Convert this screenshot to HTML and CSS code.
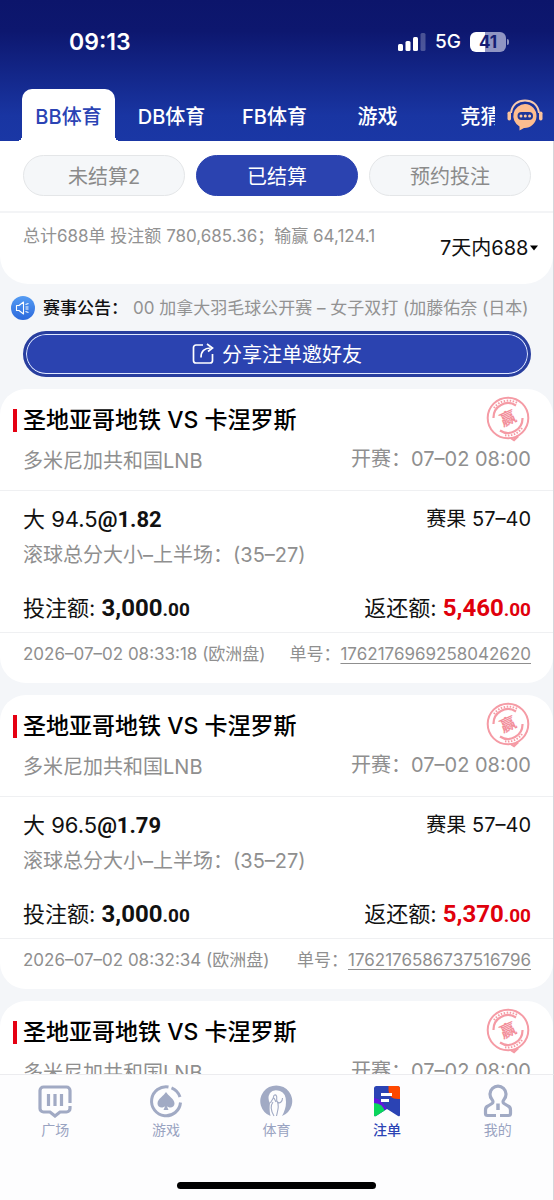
FILE: index.html
```html
<!DOCTYPE html>
<html lang="zh-CN">
<head>
<meta charset="utf-8">
<meta name="viewport" content="width=device-width, initial-scale=1">
<title>注单</title>
<link rel="stylesheet" href="styles.css">
</head>
<body>
<header class="top">
  <div class="status">
    <time class="clock">09:13</time>
    <div class="status-right">
      <svg width="28" height="18" viewBox="0 0 28 18" fill="#fff"><rect y="11" width="5" height="7" rx="1.500"/><rect x="7.500" y="8" width="5" height="10" rx="1.500"/><rect x="15" y="4" width="5" height="14" rx="1.500"/><rect x="22.500" width="5" height="18" rx="1.500" opacity=".25"/></svg>
      <span class="network">5G</span>
      <span class="battery">41</span>
    </div>
  </div>
  <div class="tab-row">
    <div class="tabs">
      <button class="tab active">BB体育</button>
      <button class="tab">DB体育</button>
      <button class="tab">FB体育</button>
      <button class="tab">游戏</button>
      <button class="tab">竞猜</button>
    </div>
    <button class="service" aria-label="客服">
      <svg width="36" height="32" viewBox="0 0 36 32">
        <path d="M4 14C5 5.500 11 1.500 18 1.500S31 5.500 32 14" fill="none" stroke="#f6c9ae" stroke-width="2"/>
        <rect x="0.500" y="12.500" width="3.500" height="9" rx="1.700" fill="#fbc49c"/><rect x="32" y="12.500" width="3.500" height="9" rx="1.700" fill="#fbc49c"/>
        <path d="M18 5a12 12 0 1 1-1 24l-4.500 2.500v-4A12 12 0 0 1 18 5z" fill="#fdbd90"/>
        <rect x="10.500" y="13" width="15.500" height="8" rx="4" fill="#1c3699"/>
        <g fill="#fdc9a2"><circle cx="14" cy="17" r="1.500"/><circle cx="18.300" cy="17" r="1.500"/><circle cx="22.600" cy="17" r="1.500"/></g>
      </svg>
    </button>
  </div>
</header>

<main class="content">
  <section class="filter">
    <div class="pills">
      <button class="pill">未结算2</button>
      <button class="pill selected">已结算</button>
      <button class="pill">预约投注</button>
    </div>
    <div class="summary">
      <p class="totals">总计688单 投注额 780,685.36；输赢 64,124.1</p>
      <label class="range">
        <select aria-label="时间范围"><option>7天内688</option></select>
        <svg width="8" height="6" viewBox="0 0 8 6"><path d="M0 .5h8L4 5.500z"/></svg>
      </label>
    </div>
  </section>

  <section class="notice">
    <svg width="24" height="24" viewBox="0 0 24 24">
      <defs><linearGradient id="blue" x1="0" y1="0" x2="0" y2="1"><stop stop-color="#559cf3"/><stop offset="1" stop-color="#2c69dc"/></linearGradient></defs>
      <circle cx="12" cy="12" r="12" fill="url(#blue)"/>
      <g fill="none" stroke="#fff" stroke-width="1.100" stroke-linejoin="round"><path d="M5.500 9.500H8l4.500-3.500v12L8 14.500H5.500z"/><path d="M14.500 8.500l3-1M14.500 11h3M14.500 13h3M14.500 15.500l3 1"/></g>
    </svg>
    <strong>赛事公告：</strong>
    <p>00 加拿大羽毛球公开赛 – 女子双打 (加藤佑奈 (日本)</p>
  </section>

  <button class="share">
    <svg width="22" height="22" viewBox="0 0 22 22" fill="none" stroke="#fff" stroke-width="1.700"><path d="M11 2H4a2.500 2.500 0 0 0-2.500 2.500v13A2.500 2.500 0 0 0 4 20h14a2.500 2.500 0 0 0 2.500-2.500V11"/><path d="M9 14.500C9 8 12.500 5 18.500 5"/><path d="M15 1l5.500 4L16 8.500"/></svg>
    <span>分享注单邀好友</span>
  </button>

  <article class="card">
    <div class="match">
      <div class="match-left"><h2>圣地亚哥地铁 VS 卡涅罗斯</h2><p>多米尼加共和国LNB</p></div>
      <div class="match-right">
        <svg class="stamp" viewBox="0 0 46 46">
          <g id="stamp">
            <g fill="none" stroke="#f59ba5">
              <circle cx="23" cy="22" r="20.300" stroke-width="2"/>
              <path d="M8.500 22A14.500 14.500 0 0 1 31 9.500" stroke-width="2.200"/>
              <path d="M37.500 22A14.500 14.500 0 0 1 15 34.500" stroke-width="2.200"/>
              <path d="M9 12A17.500 17.500 0 0 1 33 7.500M37 32A17.500 17.500 0 0 1 20 39.300" stroke-width="2" stroke-dasharray="1.500 1.500"/>
              <path d="M26 42l3 2 4-4" stroke-width="2.500"/>
            </g>
            <text x="23" y="28" text-anchor="middle" class="stamp-text" transform="rotate(-24 23 22)">赢</text>
          </g>
        </svg>
        <p>开赛：07–02 08:00</p>
      </div>
    </div>
    <div class="bet">
      <div class="row pick"><span>大 94.5<b>@1.82</b></span><span class="result">赛果 57–40</span></div>
      <p class="market">滚球总分大小–上半场：(35–27)</p>
      <div class="row money"><span>投注额: <b>3,000<small>.00</small></b></span><span>返还额: <b class="win">5,460<small>.00</small></b></span></div>
    </div>
    <div class="foot"><span>2026–07–02 08:33:18 (欧洲盘)</span><span>单号：<a href="#order1">1762176969258042620</a></span></div>
  </article>

  <article class="card">
    <div class="match">
      <div class="match-left"><h2>圣地亚哥地铁 VS 卡涅罗斯</h2><p>多米尼加共和国LNB</p></div>
      <div class="match-right"><svg class="stamp" viewBox="0 0 46 46"><use href="#stamp"/></svg><p>开赛：07–02 08:00</p></div>
    </div>
    <div class="bet">
      <div class="row pick"><span>大 96.5<b>@1.79</b></span><span class="result">赛果 57–40</span></div>
      <p class="market">滚球总分大小–上半场：(35–27)</p>
      <div class="row money"><span>投注额: <b>3,000<small>.00</small></b></span><span>返还额: <b class="win">5,370<small>.00</small></b></span></div>
    </div>
    <div class="foot"><span>2026–07–02 08:32:34 (欧洲盘)</span><span>单号：<a href="#order2">1762176586737516796</a></span></div>
  </article>

  <article class="card">
    <div class="match">
      <div class="match-left"><h2>圣地亚哥地铁 VS 卡涅罗斯</h2><p>多米尼加共和国LNB</p></div>
      <div class="match-right"><svg class="stamp" viewBox="0 0 46 46"><use href="#stamp"/></svg><p>开赛：07–02 08:00</p></div>
    </div>
  </article>
</main>

<nav class="bottom">
  <div class="links">
    <a href="#square"><svg width="34" height="34" viewBox="0 0 34 34" fill="none" stroke="#a1aac4" stroke-width="3.200"><path d="M32 19V6.500A3.500 3.500 0 0 0 28.500 3h-23A3.500 3.500 0 0 0 2 6.500v18A3.500 3.500 0 0 0 5.500 28H12l5 4 5-4h6.500a3.500 3.500 0 0 0 3.500-3.500V22"/><path d="M10.500 10v12M17 10v12M23.500 10v12"/></svg>广场</a>
    <a href="#games"><svg width="34" height="34" viewBox="0 0 34 34" fill="none" stroke="#a1aac4" stroke-width="3"><path d="M19.500 3A14.500 14.500 0 1 0 31.500 18.500"/><path d="M22.500 3.800A14.500 14.500 0 0 1 31 13"/><path d="M17 8C15 11.500 8.500 15 8.500 19.500c0 4.500 5.500 5 7.700 2.500L14.500 26h5l-1.700-4C20 24.500 25.500 24 25.500 19.500 25.500 15 19 11.500 17 8z" fill="#a1aac4" stroke="none"/></svg>游戏</a>
    <a href="#sports"><svg width="34" height="34" viewBox="0 0 34 34"><path d="M11.500 32A16 15.800 0 1 1 23 32q4-7 4-14 0-9-6-11-7-2-10 2-3 5 0 10-1 7 .5 13z" fill="#a1aac4"/><path d="M11.500 19c1-3 3-4 3-6s2-3 3-1-1 4 1 6 5 0 5-4M14 18c-3 4-2 9 1 14M18.500 18c2 5 0 9-1 14M15 14l2 4" fill="none" stroke="#a1aac4" stroke-width="1.100"/></svg>体育</a>
    <a href="#bets" class="current"><svg width="34" height="34" viewBox="0 0 34 34"><defs><clipPath id="flag"><path d="M6.500 2h21A2.500 2.500 0 0 1 30 4.500V31q0 2-2 1l-11-7-11 7q-2 1-2-1V4.500A2.500 2.500 0 0 1 6.500 2z"/></clipPath></defs><g clip-path="url(#flag)"><path fill="#2b43b4" d="M0 0h34v34H0z"/><path fill="#ff4800" d="M18.500 0H32v15h-4q-9.500 0-9.500-9z"/><path fill="#6414df" d="M2 14c8 0 11 5 15 11H4z"/><path fill="#0bd65c" d="M2 19q11 0 13 9l-5 6H2z"/></g><path stroke="#fff" stroke-width="3" d="M11 10.500h11M11 16.500h8"/></svg>注单</a>
    <a href="#me"><svg width="34" height="34" viewBox="0 0 34 34" fill="none" stroke="#a1aac4" stroke-width="3.200" stroke-linejoin="round"><path d="M15 31.500H6.500Q4.500 31.500 4.500 29.500V26q0-3 2.500-4l4-2.500q2-1.500 0-4a8 8 0 1 1 12 0q-2 2.500 0 4l4 2.500q2.500 1 2.500 4v3.500q0 2-2 2H19"/><path d="M17 19.500v6.500" stroke-width="3.500"/></svg>我的</a>
  </div>
  <div class="home-bar"></div>
</nav>
</body>
</html>
```
FILE: styles.css
```css
* { box-sizing: border-box; }

body {
  margin: 0;
  height: 100vh;
  display: flex;
  flex-direction: column;
  background: #f4f6f9;
  color: #111;
  font: 20px/28px Inter, "Noto Sans CJK SC", sans-serif;
}

h2, p { margin: 0; font-weight: 400; }
button { border: 0; margin: 0; padding: 0; background: none; font: inherit; color: inherit; }
svg { display: block; flex: none; }

.top {
  flex: none;
  color: #fff;
  background: linear-gradient(#0c156b 0, #0d176f 22%, #1935a2 82%, #1a37a5);
}
.status {
  display: flex;
  justify-content: space-between;
  align-items: center;
  padding: 28px 48px 33px 69px;
}
.clock { font-size: 23px; font-weight: 600; }
.status-right { display: flex; align-items: center; gap: 9px; }
.network { font-size: 19px; font-weight: 500; }
.battery {
  position: relative;
  width: 36px;
  border-radius: 6px;
  background: linear-gradient(90deg, #fff 41%, #9095c3 41%);
  color: #151d73;
  font-size: 17px;
  font-weight: 700;
  line-height: 20px;
  text-align: center;
}
.battery::after {
  content: "";
  position: absolute;
  right: -3px;
  top: 7px;
  width: 2px;
  height: 6px;
  border-radius: 0 2px 2px 0;
  background: #8b90bf;
}

.tab-row { display: flex; align-items: center; gap: 12px; padding: 0 11px 0 17px; }
.tabs { flex: 1; display: flex; min-width: 0; overflow: hidden; }
.tab { flex: 0 0 103px; height: 52px; padding-top: 3px; font-weight: 500; }
.tab.active {
  position: relative;
  flex-basis: 93px;
  margin: 0 5px;
  border-radius: 10px 10px 0 0;
  background: #fff;
  color: #2b43b4;
}
.tab.active::before, .tab.active::after {
  content: "";
  position: absolute;
  bottom: 0;
  width: 5px;
  height: 5px;
}
.tab.active::before { right: 100%; background: radial-gradient(circle at 0 0, transparent 5px, #fff 5px); }
.tab.active::after { left: 100%; background: radial-gradient(circle at 100% 0, transparent 5px, #fff 5px); }

.content {
  flex: 1;
  min-height: 0;
  overflow-y: auto;
  scrollbar-width: none;
  border-right: 1px solid #d5d6db;
}
.filter { background: #fff; border-radius: 0 0 28px 28px; }
.pills { display: flex; gap: 11px; padding: 14px 22px 15px 23px; border-bottom: 2px solid #f3f4f6; }
.pill {
  flex: 1;
  height: 41px;
  padding-top: 2px;
  border: 1px solid #e4e6e8;
  border-radius: 21px;
  background: #f5f7f9;
  color: #8b8b8b;
}
.pill.selected { background: #2b43b0; border-color: #2b43b0; color: #fff; }
.summary { display: flex; justify-content: space-between; padding: 9px 15px 22px 23px; }
.totals { color: #929292; font-size: 17px; }
.range { display: flex; align-items: center; gap: 1px; padding-top: 12px; }
.range select { appearance: none; border: 0; padding: 0; background: none; font: inherit; color: #111; }

.notice { display: flex; align-items: center; padding: 10px 22px 9px 11px; font-size: 17px; white-space: nowrap; }
.notice strong { margin-left: 8px; font-weight: 500; }
.notice p { flex: 1; margin-left: 5px; overflow: hidden; color: #929292; }

.share {
  display: flex;
  align-items: center;
  justify-content: center;
  gap: 8px;
  width: calc(100% - 45px);
  height: 46px;
  margin: 0 22px 12px 23px;
  border: 3px solid #283e9e;
  border-radius: 23px;
  background: #2b43b0;
  box-shadow: inset 0 0 0 1px #dfe8ff;
  color: #fff;
}
.share span { padding-top: 2px; }

.card { margin-bottom: 12px; border-radius: 26px; background: #fff; }
.match {
  display: flex;
  justify-content: space-between;
  padding: 7px 22px 15px 13px;
  border-bottom: 1px solid #eff0f2;
  color: #8f8f8f;
}
.match-left { padding-top: 8px; }
.match h2 {
  display: flex;
  align-items: center;
  gap: 6px;
  color: #000;
  font-size: 23px;
  font-weight: 500;
  line-height: 32px;
}
.match h2::before { content: ""; width: 4px; height: 23px; background: #e50012; }
.match-left p { margin: 11px 0 0 10px; }
.match-right { display: flex; flex-direction: column; align-items: flex-end; gap: 3px; }
.stamp { width: 46px; height: 46px; }
.stamp-text { fill: #f28c98; font-size: 16px; font-weight: 700; }

.bet { padding: 14px 22px 8px 23px; border-bottom: 1px solid #eff0f2; }
.row { display: flex; justify-content: space-between; }
.row b { font-family: Roboto, sans-serif; line-height: 1; }
.pick { font-size: 22px; }
.result { font-size: 20px; }
.market { margin: 8px 0 23px; color: #8f8f8f; }
.money { font-size: 22px; line-height: 32px; }
.money b { font-size: 24px; }
.money small { font-size: 19px; }
.row .win { color: #e0000c; }
.foot {
  display: flex;
  justify-content: space-between;
  padding: 11px 22px 19px 23px;
  color: #8f8f8f;
  font-size: 17px;
  line-height: 20px;
}
.foot a { color: inherit; text-underline-offset: 3px; }

.bottom { flex: none; border-top: 1px solid #ececef; border-right: 1px solid #d5d6db; background: #fdfdfe; }
.links { display: flex; padding-top: 9px; }
.links a {
  flex: 1;
  display: flex;
  flex-direction: column;
  align-items: center;
  gap: 2px;
  color: #99a3c1;
  font-size: 14px;
  line-height: 20px;
  text-decoration: none;
}
.links .current { color: #2b43b4; font-weight: 500; }
.home-bar { width: 36%; height: 7px; margin: 42px auto 11px; border-radius: 4px; background: #000; }
```
